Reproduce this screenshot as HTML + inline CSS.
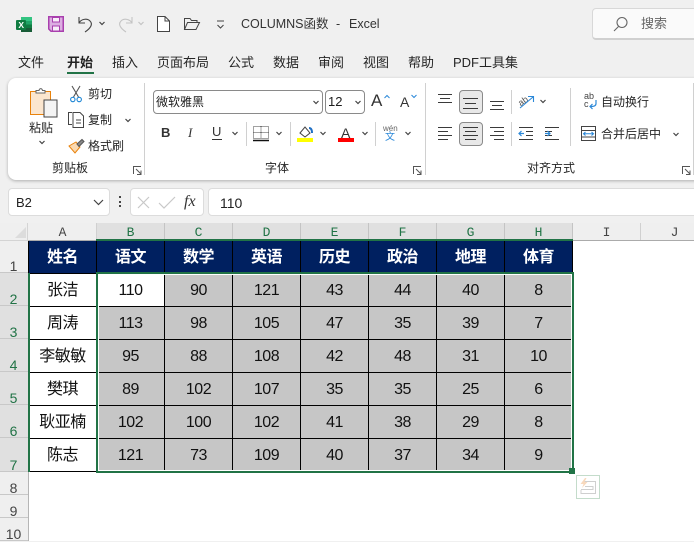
<!DOCTYPE html>
<html><head><meta charset="utf-8"><style>
html,body{margin:0;padding:0}
body{width:694px;height:541px;overflow:hidden;position:relative;background:#f0f0f0;font-family:"Liberation Sans","Noto Sans CJK SC",sans-serif;color:#262626}
.t{position:absolute;white-space:nowrap;line-height:16px}
.f13{font-size:13px}.f12{font-size:12px}
.b{position:absolute;box-sizing:border-box}
svg{position:absolute;overflow:visible}
.sep{position:absolute;width:1px;background:#d0d0d0}
.ch{position:absolute;width:8px;height:5px}
.box{position:absolute;box-sizing:border-box;background:#fff;border:1px solid #dcdcdc;border-radius:4px}
.ch2{fill:none;stroke:#444;stroke-width:1.2}
.ln{stroke:#3a3a3a;stroke-width:1;fill:none}
.colh{position:absolute;top:223px;height:17px;width:68px;text-align:center;font:13px/20px "Liberation Mono",monospace;color:#444;box-sizing:border-box;border-right:1px solid #d0d0d0}
.colh.s{background:#e0e0e0;color:#217346;border-right:1px solid #c4c4c4}
.rowh{position:absolute;left:0;width:28px;box-sizing:border-box;text-align:center;font-size:14px;line-height:16px;color:#444;background:#efefef;border-bottom:1px solid #c8c8c8}
.rowh span{position:absolute;left:0;right:1px;bottom:-2px}
.rowh.s{background:#e0e0e0;color:#217346}
table{position:absolute;left:28px;top:241px;border-collapse:separate;border-spacing:0;table-layout:fixed;width:545px;font-size:16px;letter-spacing:-.5px;color:#111;text-align:center}
td{padding:2px 0 0;border-right:1px solid #000;border-bottom:1px solid #000;box-sizing:border-box;background:#c6c6c6;line-height:20px;overflow:hidden}
td:first-child{background:#fff;border-left:1px solid #000}
tr.h td{background:#002060;color:#fff;font-weight:bold;height:33px}
tr.r td{height:33px}
td.w{background:#fff}
</style></head><body>

<!-- title bar -->
<svg style="left:16px;top:16px" width="17" height="17" viewBox="0 0 17 17"><rect x="5" y="1" width="11" height="15" rx="1" fill="#21a366"/><rect x="5" y="1" width="11" height="4" fill="#33c481"/><rect x="5" y="8.500" width="11" height="4" fill="#107c41"/><rect x="5" y="12" width="11" height="4" fill="#185c37"/><rect x="0" y="4" width="10" height="10" rx="1" fill="#107c41"/><text x="2.400" y="12" font-size="8.500" font-weight="bold" fill="#fff" font-family="Liberation Sans">X</text></svg>
<svg style="left:48px;top:16px" width="16" height="16" viewBox="0 0 16 16"><path d="M.75.75H15.250V15.250H3L.75 13Z" fill="#dcaee2" stroke="#a93fae" stroke-width="1.500"/><rect x="4.500" y="1.500" width="7" height="4.500" fill="#f8eef9" stroke="#a93fae"/><rect x="4.500" y="10" width="7" height="5" fill="#f8eef9" stroke="#a93fae"/></svg>
<svg style="left:77px;top:15px" width="18" height="18" viewBox="0 0 18 18" fill="none" stroke="#444" stroke-width="1.100"><path d="M2 2V8H8M2 8C4 4 10 3 13 6C16 9 14 13 8 17"/></svg>
<svg class="ch" style="left:98px;top:21px" viewBox="0 0 8 5"><path class="ch2" d="M1.500 1L4 3.500L6.500 1"/></svg>
<svg style="left:116px;top:15px" width="18" height="18" viewBox="0 0 18 18" fill="none" stroke="#c4c4c4" stroke-width="1.100"><path d="M16 2V8H10M16 8C14 4 8 3 5 6C2 9 4 13 10 17"/></svg>
<svg class="ch" style="left:137px;top:21px" viewBox="0 0 8 5"><path d="M1.500 1L4 3.500L6.500 1" fill="none" stroke="#c4c4c4" stroke-width="1.200"/></svg>
<svg style="left:157px;top:16px" width="13" height="16" viewBox="0 0 13 16" fill="#fff" stroke="#444"><path d="M.5.500H8L12.500 5V15.500H.5Z"/><path d="M8 .5V5H12.500" fill="none"/></svg>
<svg style="left:184px;top:18px" width="16" height="12" viewBox="0 0 16 12" fill="none" stroke="#444"><path d="M.5 11.500V.5H6L7.500 2.500H13V4.500M.5 11.500H12L15.500 4.500H3.500L.5 11.500Z"/></svg>
<svg style="left:216px;top:20px" width="9" height="9" viewBox="0 0 9 9" fill="none" stroke="#444"><path d="M1 1H8M1.500 5L4.500 8L7.500 5"/></svg>
<div class="t" style="left:241px;top:16px;font-size:12.500px;color:#333">COLUMNS函数</div>
<div class="t" style="left:336px;top:16px;font-size:12.500px;color:#333">-</div>
<div class="t" style="left:349px;top:16px;font-size:12.500px;color:#333">Excel</div>
<div class="b" style="left:592px;top:8px;width:110px;height:32px;background:#fafafa;border:1px solid #d8d8d8;border-bottom:2px solid #d0d0d0;border-radius:4px"></div>
<svg style="left:613px;top:16px" width="15" height="16" viewBox="0 0 15 16" fill="none" stroke="#666" stroke-width="1.100"><circle cx="9" cy="6.500" r="5"/><path d="M5.500 10.500L1 15"/></svg>
<div class="t" style="left:641px;top:16px;font-size:13px;color:#666">搜索</div>

<!-- tabs -->
<div class="t f13" style="left:18px;top:55px">文件</div>
<div class="t f13" style="left:67px;top:55px;font-weight:bold;color:#222">开始</div>
<div class="b" style="left:67px;top:72px;width:27px;height:2px;background:#217346"></div>
<div class="t f13" style="left:112px;top:55px">插入</div>
<div class="t f13" style="left:157px;top:55px">页面布局</div>
<div class="t f13" style="left:228px;top:55px">公式</div>
<div class="t f13" style="left:273px;top:55px">数据</div>
<div class="t f13" style="left:318px;top:55px">审阅</div>
<div class="t f13" style="left:363px;top:55px">视图</div>
<div class="t f13" style="left:408px;top:55px">帮助</div>
<div class="t f13" style="left:453px;top:55px">PDF工具集</div>

<!-- ribbon -->
<div class="b" style="left:8px;top:78px;width:700px;height:102px;background:#fff;border-radius:8px;box-shadow:0 1px 3px rgba(0,0,0,.28)"></div>
<div class="sep" style="left:144px;top:83px;height:92px"></div>
<div class="sep" style="left:425px;top:83px;height:92px"></div>
<div class="sep" style="left:693px;top:83px;height:92px"></div>

<svg style="left:30px;top:87px" width="28" height="30" viewBox="0 0 28 30"><rect x=".5" y="4.500" width="20" height="23" fill="#fbe6cf" stroke="#e8820c"/><path d="M6 6V3.500H9C9.500 1 12 1 12.500 3.500H15V6Z" fill="#fff" stroke="#666"/><rect x="14" y="13" width="13" height="17" fill="#f4f4f4" stroke="#444"/></svg>
<div class="t f12" style="left:29px;top:120px">粘贴</div>
<svg class="ch" style="left:38px;top:140px" viewBox="0 0 8 5"><path class="ch2" d="M1.500 1L4 3.500L6.500 1"/></svg>
<svg style="left:70px;top:85px" width="12" height="18" viewBox="0 0 12 18" fill="none"><path d="M2 1L8.500 12M10 1L3.500 12" stroke="#555" stroke-width="1.100"/><circle cx="2.800" cy="14.500" r="2.200" stroke="#1f87d6" stroke-width="1.100"/><circle cx="9.200" cy="14.500" r="2.200" stroke="#1f87d6" stroke-width="1.100"/></svg>
<div class="t f12" style="left:88px;top:86px">剪切</div>
<svg style="left:68px;top:112px" width="17" height="16" viewBox="0 0 17 16" fill="none" stroke="#444"><path d="M4 .5H.5V12.500H4"/><path d="M5 .5H12L15.500 4V15.500H5Z" fill="#fff"/><path d="M8 8H13M8 11H13"/></svg>
<div class="t f12" style="left:88px;top:112px">复制</div>
<svg class="ch" style="left:124px;top:118px" viewBox="0 0 8 5"><path class="ch2" d="M1.500 1L4 3.500L6.500 1"/></svg>
<svg style="left:68px;top:138px" width="17" height="16" viewBox="0 0 17 16"><path d="M1 8L8 4L12 9L7 15Z" fill="#fbd9b0" stroke="#e8820c"/><path d="M9 6L14 1.500L16 3.500L11 8.500Z" fill="#888" stroke="#555"/></svg>
<div class="t f12" style="left:88px;top:138px">格式刷</div>
<div class="t f12" style="left:52px;top:160px">剪贴板</div>
<svg style="left:133px;top:166px" width="9" height="9" viewBox="0 0 9 9" fill="none" stroke="#555"><path d="M.5 8V.5H8M3 3L8 8M8 4.500V8.500H4"/></svg>

<div class="b" style="left:153px;top:90px;width:170px;height:24px;background:#fff;border:1px solid #8a8a8a;border-radius:4px"></div>
<div class="t f12" style="left:156px;top:94px;color:#1d1d1d">微软雅黑</div>
<svg class="ch" style="left:312px;top:100px" viewBox="0 0 8 5"><path class="ch2" d="M1.500 1L4 3.500L6.500 1"/></svg>
<div class="b" style="left:325px;top:90px;width:40px;height:24px;background:#fff;border:1px solid #8a8a8a;border-radius:4px"></div>
<div class="t" style="left:328px;top:94px;font-size:13px;color:#1d1d1d">12</div>
<svg class="ch" style="left:354px;top:100px" viewBox="0 0 8 5"><path class="ch2" d="M1.500 1L4 3.500L6.500 1"/></svg>
<div class="t" style="left:371px;top:93px;font-size:17px;color:#333">A</div>
<svg class="ch" style="left:383px;top:94px" viewBox="0 0 8 5"><path d="M1.500 4L4 1.500L6.500 4" fill="none" stroke="#2b88d8"/></svg>
<div class="t" style="left:400px;top:94px;font-size:14px;color:#333">A</div>
<svg class="ch" style="left:410px;top:94px" viewBox="0 0 8 5"><path d="M1.500 1L4 3.500L6.500 1" fill="none" stroke="#2b88d8"/></svg>

<div class="t" style="left:161px;top:125px;font-size:13px;font-weight:bold;color:#333">B</div>
<div class="t" style="left:188px;top:125px;font:italic 13px/16px 'Liberation Serif',serif;color:#333">I</div>
<div class="t" style="left:212px;top:124px;font-size:13px;color:#333">U</div>
<div class="b" style="left:212px;top:139px;width:10px;height:1px;background:#333"></div>
<svg class="ch" style="left:231px;top:131px" viewBox="0 0 8 5"><path class="ch2" d="M1.500 1L4 3.500L6.500 1"/></svg>
<div class="sep" style="left:246px;top:122px;height:24px"></div>
<svg style="left:253px;top:126px" width="16" height="16" viewBox="0 0 16 16" fill="none" stroke="#444"><path stroke-dasharray="1 1" d="M.5.500H15.500V12.500H.5ZM8 .5V12.500M.5 6.500H15.500"/><path d="M0 14.500H16" stroke="#111" stroke-width="1.500"/></svg>
<svg class="ch" style="left:275px;top:131px" viewBox="0 0 8 5"><path class="ch2" d="M1.500 1L4 3.500L6.500 1"/></svg>
<div class="sep" style="left:290px;top:122px;height:24px"></div>
<svg style="left:299px;top:126px" width="14" height="12" viewBox="0 0 14 12"><path d="M1 7L6 1L11 7L6 11Z" fill="#fff" stroke="#444"/><path d="M10 2C12 2 13 4 13 7" fill="none" stroke="#1f6fc4" stroke-width="2"/></svg>
<div class="b" style="left:297px;top:138px;width:16px;height:4px;background:#ffff00"></div>
<svg class="ch" style="left:319px;top:131px" viewBox="0 0 8 5"><path class="ch2" d="M1.500 1L4 3.500L6.500 1"/></svg>
<div class="t" style="left:341px;top:125px;font-size:14px;color:#333">A</div>
<div class="b" style="left:338px;top:138px;width:16px;height:4px;background:#ff0000"></div>
<svg class="ch" style="left:361px;top:131px" viewBox="0 0 8 5"><path class="ch2" d="M1.500 1L4 3.500L6.500 1"/></svg>
<div class="sep" style="left:375px;top:122px;height:24px"></div>
<div class="t" style="left:383px;top:124px;font-size:8px;line-height:9px;color:#666">wén</div>
<div class="t" style="left:385px;top:132px;font-size:10px;line-height:11px;color:#2b88d8">文</div>
<svg class="ch" style="left:404px;top:131px" viewBox="0 0 8 5"><path class="ch2" d="M1.500 1L4 3.500L6.500 1"/></svg>
<div class="t f12" style="left:265px;top:160px">字体</div>
<svg style="left:413px;top:166px" width="9" height="9" viewBox="0 0 9 9" fill="none" stroke="#555"><path d="M.5 8V.5H8M3 3L8 8M8 4.500V8.500H4"/></svg>

<div class="b" style="left:459px;top:90px;width:24px;height:24px;background:#e8e8e8;border:1px solid #8a8a8a;border-radius:4px"></div>
<div class="b" style="left:459px;top:122px;width:24px;height:24px;background:#e8e8e8;border:1px solid #8a8a8a;border-radius:4px"></div>
<svg style="left:438px;top:90px" width="70" height="24" viewBox="0 0 70 24"><path class="ln" d="M0 4.500H14M2 8.500H12M0 12.500H14M25 8.500H40M27 13.500H38M25 18.500H40M52 11.500H66M54 15.500H64M52 19.500H66"/></svg>
<svg style="left:438px;top:126px" width="70" height="16" viewBox="0 0 70 16"><path class="ln" d="M0 1.500H14M0 5.500H10M0 9.500H14M0 13.500H10M25 1.500H40M27 5.500H38M25 9.500H40M27 13.500H38M52 1.500H66M56 5.500H66M52 9.500H66M56 13.500H66"/></svg>
<div class="sep" style="left:511px;top:90px;height:24px"></div>
<div class="sep" style="left:511px;top:122px;height:24px"></div>
<svg style="left:518px;top:93px" width="17" height="17" viewBox="0 0 17 17"><text x="0" y="11" font-size="9" fill="#555" transform="rotate(-35 5 8)" font-family="Liberation Sans">ab</text><path d="M2 15L15 4M10 3.500H15.500V9" fill="none" stroke="#2b88d8" stroke-width="1.100"/></svg>
<svg class="ch" style="left:539px;top:99px" viewBox="0 0 8 5"><path class="ch2" d="M1.500 1L4 3.500L6.500 1"/></svg>
<svg style="left:519px;top:126px" width="42" height="16" viewBox="0 0 42 16"><path class="ln" d="M0 1.500H14M7 5.500H14M7 9.500H14M0 13.500H14M26 1.500H40M26 5.500H33M26 9.500H33M26 13.500H40"/><path d="M5 7.500H0M2.500 5L0 7.500L2.500 10M26 7.500H31M28.500 5L31 7.500L28.500 10" fill="none" stroke="#2b88d8" stroke-width="1.200"/></svg>
<div class="sep" style="left:570px;top:88px;height:58px"></div>
<div class="t" style="left:584px;top:92px;font-size:9px;line-height:8px;color:#444">ab<br>c</div>
<svg style="left:589px;top:100px" width="9" height="10" viewBox="0 0 9 10" fill="none" stroke="#2b88d8" stroke-width="1.200"><path d="M7 0V3.500C7 6 5 6.500 1 6.500M3.500 4L1 6.500L3.500 9"/></svg>
<div class="t f12" style="left:601px;top:94px">自动换行</div>
<svg style="left:581px;top:126px" width="16" height="16" viewBox="0 0 16 16" fill="none"><rect x=".5" y=".5" width="14" height="14" fill="#fff" stroke="#444"/><path d="M.5 4.500H14.500M.5 11H14.500" stroke="#444"/><path d="M2.500 7.750H12.500M4.500 6L2.500 7.750L4.500 9.500M10.500 6L12.500 7.750L10.500 9.500" stroke="#2b88d8" stroke-width="1.100"/></svg>
<div class="t f12" style="left:601px;top:126px">合并后居中</div>
<svg class="ch" style="left:672px;top:132px" viewBox="0 0 8 5"><path class="ch2" d="M1.500 1L4 3.500L6.500 1"/></svg>
<div class="t f12" style="left:527px;top:160px">对齐方式</div>
<svg style="left:682px;top:166px" width="9" height="9" viewBox="0 0 9 9" fill="none" stroke="#555"><path d="M.5 8V.5H8M3 3L8 8M8 4.500V8.500H4"/></svg>

<!-- formula bar -->
<div class="box" style="left:8px;top:188px;width:102px;height:28px"></div>
<div class="t" style="left:16px;top:195px;font-size:13px;color:#222">B2</div>
<svg style="left:93px;top:199px" width="11" height="7" viewBox="0 0 11 7"><path d="M1 1L5.500 5.500L10 1" fill="none" stroke="#444" stroke-width="1.200"/></svg>
<div class="b" style="left:119px;top:196px;width:2px;height:2px;background:#444"></div>
<div class="b" style="left:119px;top:201px;width:2px;height:2px;background:#444"></div>
<div class="b" style="left:119px;top:205px;width:2px;height:2px;background:#444"></div>
<div class="box" style="left:130px;top:188px;width:74px;height:28px"></div>
<svg style="left:137px;top:196px" width="44" height="13" viewBox="0 0 44 13" fill="none" stroke="#c8c8c8" stroke-width="1.200"><path d="M1 1L12 12M12 1L1 12M22 7L27 12L38 1"/></svg>
<div class="t" style="left:184px;top:194px;font:italic 16px/16px 'Liberation Serif',serif;color:#333">fx</div>
<div class="box" style="left:208px;top:188px;width:500px;height:28px"></div>
<div class="t" style="left:220px;top:195px;font-size:14px;color:#222">110</div>

<!-- sheet -->
<div class="b" style="left:0;top:223px;width:694px;height:318px;background:#fff"></div>
<div class="b" style="left:0;top:223px;width:694px;height:18px;background:#efefef;border-bottom:1px solid #ababab"></div>
<div class="b" style="left:0;top:223px;width:28px;height:18px;background:#efefef;border-right:1px solid #d4d4d4;border-bottom:1px solid #d4d4d4"></div>
<svg style="left:15px;top:227px" width="11" height="11" viewBox="0 0 11 11"><path d="M11 0V11H0Z" fill="#dcdcdc"/></svg>
<div class="colh" style="left:29px">A</div>
<div class="colh s" style="left:97px">B</div>
<div class="colh s" style="left:165px">C</div>
<div class="colh s" style="left:233px">D</div>
<div class="colh s" style="left:301px">E</div>
<div class="colh s" style="left:369px">F</div>
<div class="colh s" style="left:437px">G</div>
<div class="colh s" style="left:505px">H</div>
<div class="colh" style="left:573px">I</div>
<div class="colh" style="left:641px">J</div>

<div class="rowh" style="top:241px;height:32px"><span>1</span></div>
<div class="rowh s" style="top:273px;height:33px"><span>2</span></div>
<div class="rowh s" style="top:306px;height:33px"><span>3</span></div>
<div class="rowh s" style="top:339px;height:33px"><span>4</span></div>
<div class="rowh s" style="top:372px;height:33px"><span>5</span></div>
<div class="rowh s" style="top:405px;height:33px"><span>6</span></div>
<div class="rowh s" style="top:438px;height:34px"><span>7</span></div>
<div class="rowh" style="top:472px;height:23px"><span>8</span></div>
<div class="rowh" style="top:495px;height:23px"><span>9</span></div>
<div class="rowh" style="top:518px;height:23px"><span>10</span></div>
<div class="b" style="left:28px;top:240px;width:1px;height:301px;background:#b5b5b5"></div>

<table>
<colgroup><col style="width:69px"><col style="width:68px"><col style="width:68px"><col style="width:68px"><col style="width:68px"><col style="width:68px"><col style="width:68px"><col style="width:68px"></colgroup>
<tr class="h"><td style="background:#002060">姓名</td><td>语文</td><td>数学</td><td>英语</td><td>历史</td><td>政治</td><td>地理</td><td>体育</td></tr>
<tr class="r"><td>张洁</td><td class="w">110</td><td>90</td><td>121</td><td>43</td><td>44</td><td>40</td><td>8</td></tr>
<tr class="r"><td>周涛</td><td>113</td><td>98</td><td>105</td><td>47</td><td>35</td><td>39</td><td>7</td></tr>
<tr class="r"><td>李敏敏</td><td>95</td><td>88</td><td>108</td><td>42</td><td>48</td><td>31</td><td>10</td></tr>
<tr class="r"><td>樊琪</td><td>89</td><td>102</td><td>107</td><td>35</td><td>35</td><td>25</td><td>6</td></tr>
<tr class="r"><td>耿亚楠</td><td>102</td><td>100</td><td>102</td><td>41</td><td>38</td><td>29</td><td>8</td></tr>
<tr class="r"><td>陈志</td><td>121</td><td>73</td><td>109</td><td>40</td><td>37</td><td>34</td><td>9</td></tr>
</table>

<!-- selection -->
<div class="b" style="left:96px;top:239px;width:477px;height:2px;background:#217346"></div>
<div class="b" style="left:28px;top:273px;width:1.500px;height:199px;background:#217346"></div>
<div class="b" style="left:96px;top:272px;width:478px;height:201px;border:2px solid #217346;box-shadow:inset 0 0 0 1px #fff"></div>
<div class="b" style="left:569px;top:468px;width:6px;height:6px;background:#217346"></div>

<!-- quick analysis -->
<div class="b" style="left:576px;top:475px;width:24px;height:24px;border:1px solid #c4dccb;background:#fff"></div>
<svg style="left:579px;top:478px" width="18" height="18" viewBox="0 0 18 18" fill="none" stroke="#cfcfcf"><path d="M5 3.500H16.500V15.500H2V12M6 8.500H14V11.500H2"/><path d="M6 0L1.500 6H4.500L3 10L8.500 4H5.500L7.500 0Z" fill="#f8d9bd" stroke="none"/></svg>
</body></html>
